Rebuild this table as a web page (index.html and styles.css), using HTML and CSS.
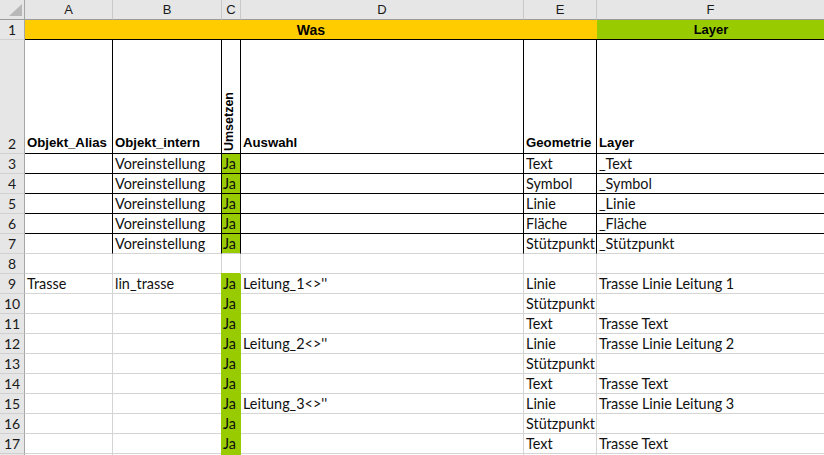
FILE: index.html
```html
<!DOCTYPE html>
<html lang="de">
<head>
<meta charset="utf-8">
<title>Tabelle</title>
<link rel="stylesheet" href="styles.css">
</head>
<body>
<div class="sheet">
  <!-- column headers -->
  <div class="corner"><span class="tri"></span></div>
  <div class="ch">A</div>
  <div class="ch">B</div>
  <div class="ch">C</div>
  <div class="ch">D</div>
  <div class="ch">E</div>
  <div class="ch">F</div>

  <!-- row 1 -->
  <div class="rh">1</div>
  <div class="title was">Was</div>
  <div class="title layer">Layer</div>

  <!-- row 2 -->
  <div class="rh">2</div>
  <div class="c b hd">Objekt_Alias</div>
  <div class="c b hd">Objekt_intern</div>
  <div class="c b hd vert"><span class="vtext">Umsetzen</span></div>
  <div class="c b hd">Auswahl</div>
  <div class="c b hd">Geometrie</div>
  <div class="c b hd">Layer</div>

  <!-- row 3 -->
  <div class="rh">3</div>
  <div class="c b"></div>
  <div class="c b">Voreinstellung</div>
  <div class="c b ja">Ja</div>
  <div class="c b"></div>
  <div class="c b">Text</div>
  <div class="c b">_Text</div>

  <!-- row 4 -->
  <div class="rh">4</div>
  <div class="c b"></div>
  <div class="c b">Voreinstellung</div>
  <div class="c b ja">Ja</div>
  <div class="c b"></div>
  <div class="c b">Symbol</div>
  <div class="c b">_Symbol</div>

  <!-- row 5 -->
  <div class="rh">5</div>
  <div class="c b"></div>
  <div class="c b">Voreinstellung</div>
  <div class="c b ja">Ja</div>
  <div class="c b"></div>
  <div class="c b">Linie</div>
  <div class="c b">_Linie</div>

  <!-- row 6 -->
  <div class="rh">6</div>
  <div class="c b"></div>
  <div class="c b">Voreinstellung</div>
  <div class="c b ja">Ja</div>
  <div class="c b"></div>
  <div class="c b">Fläche</div>
  <div class="c b">_Fläche</div>

  <!-- row 7 -->
  <div class="rh">7</div>
  <div class="c b open"></div>
  <div class="c b open">Voreinstellung</div>
  <div class="c b open ja">Ja</div>
  <div class="c b open"></div>
  <div class="c b open">Stützpunkt</div>
  <div class="c b open">_Stützpunkt</div>

  <!-- row 8 -->
  <div class="rh">8</div>
  <div class="c"></div>
  <div class="c"></div>
  <div class="c"></div>
  <div class="c"></div>
  <div class="c"></div>
  <div class="c"></div>

  <!-- row 9 -->
  <div class="rh">9</div>
  <div class="c">Trasse</div>
  <div class="c">lin_trasse</div>
  <div class="c ja fill">Ja</div>
  <div class="c">Leitung_1&lt;&gt;''</div>
  <div class="c">Linie</div>
  <div class="c">Trasse Linie Leitung 1</div>

  <!-- row 10 -->
  <div class="rh">10</div>
  <div class="c"></div>
  <div class="c"></div>
  <div class="c ja fill">Ja</div>
  <div class="c"></div>
  <div class="c">Stützpunkt</div>
  <div class="c"></div>

  <!-- row 11 -->
  <div class="rh">11</div>
  <div class="c"></div>
  <div class="c"></div>
  <div class="c ja fill">Ja</div>
  <div class="c"></div>
  <div class="c">Text</div>
  <div class="c">Trasse Text</div>

  <!-- row 12 -->
  <div class="rh">12</div>
  <div class="c"></div>
  <div class="c"></div>
  <div class="c ja fill">Ja</div>
  <div class="c">Leitung_2&lt;&gt;''</div>
  <div class="c">Linie</div>
  <div class="c">Trasse Linie Leitung 2</div>

  <!-- row 13 -->
  <div class="rh">13</div>
  <div class="c"></div>
  <div class="c"></div>
  <div class="c ja fill">Ja</div>
  <div class="c"></div>
  <div class="c">Stützpunkt</div>
  <div class="c"></div>

  <!-- row 14 -->
  <div class="rh">14</div>
  <div class="c"></div>
  <div class="c"></div>
  <div class="c ja fill">Ja</div>
  <div class="c"></div>
  <div class="c">Text</div>
  <div class="c">Trasse Text</div>

  <!-- row 15 -->
  <div class="rh">15</div>
  <div class="c"></div>
  <div class="c"></div>
  <div class="c ja fill">Ja</div>
  <div class="c">Leitung_3&lt;&gt;''</div>
  <div class="c">Linie</div>
  <div class="c">Trasse Linie Leitung 3</div>

  <!-- row 16 -->
  <div class="rh">16</div>
  <div class="c"></div>
  <div class="c"></div>
  <div class="c ja fill">Ja</div>
  <div class="c"></div>
  <div class="c">Stützpunkt</div>
  <div class="c"></div>

  <!-- row 17 -->
  <div class="rh">17</div>
  <div class="c"></div>
  <div class="c"></div>
  <div class="c ja fill">Ja</div>
  <div class="c"></div>
  <div class="c">Text</div>
  <div class="c">Trasse Text</div>

  <!-- row 18 (only its top edge is in view) -->
  <div class="rh"></div>
  <div class="c"></div>
  <div class="c"></div>
  <div class="c ja fill"></div>
  <div class="c"></div>
  <div class="c"></div>
  <div class="c"></div>
</div>
</body>
</html>
```

FILE: styles.css
```css
html, body {
  margin: 0;
  padding: 0;
  background: #ffffff;
  overflow: hidden;
}

.sheet {
  display: grid;
  grid-template-columns: 25px 88px 109px 19px 283px 73px 228px;
  grid-template-rows: 20px 20px 114px repeat(16, 20px);
  width: 825px;
  font-family: Lato, "Open Sans", sans-serif;
  font-size: 14.4px;
  color: #111111;
}

.sheet > div {
  box-sizing: border-box;
  min-width: 0;
}

/* headers */
.corner {
  background: #e6e6e6;
  border-right: 1px solid #a6a6a6;
  border-bottom: 1px solid #9b9b9b;
  position: relative;
}

.tri {
  position: absolute;
  right: 2px;
  bottom: 3px;
  width: 0;
  height: 0;
  border-left: 13px solid transparent;
  border-bottom: 12px solid #b8b8b8;
}

.ch {
  background: #e6e6e6;
  border-right: 1px solid #c9c9c9;
  border-bottom: 1px solid #9b9b9b;
  display: flex;
  align-items: center;
  justify-content: center;
  font-size: 13px;
  color: #1a1a1a;
  font-family: "Liberation Sans", Arial, sans-serif;
}

.rh {
  background: #e6e6e6;
  border-right: 1px solid #a6a6a6;
  border-bottom: 1px solid #d0d0d0;
  display: flex;
  align-items: flex-end;
  justify-content: center;
  font-size: 14px;
  line-height: 17px;
  padding-bottom: 1px;
  color: #1a1a1a;
}

/* row 1 titles */
.title {
  display: flex;
  align-items: center;
  justify-content: center;
  font-family: "Liberation Sans", Arial, sans-serif;
  font-weight: bold;
  font-size: 13px;
  color: #000000;
  border-bottom: 1px solid #000000;
}

.was {
  grid-column: span 5;
  background: #ffcc00;
  font-size: 14px;
}

.layer {
  background: #99cc00;
}

/* cells */
.c {
  border-right: 1px solid #d4d4d4;
  border-bottom: 1px solid #d4d4d4;
  display: flex;
  align-items: flex-end;
  padding: 0 0 0 2px;
  line-height: 18px;
  white-space: nowrap;
  overflow: hidden;
}

.c.b {
  border-right-color: #000000;
  border-bottom-color: #000000;
}

.c.b.open {
  border-bottom-color: #d4d4d4;
}

.c.hd {
  font-family: "Liberation Sans", Arial, sans-serif;
  font-weight: bold;
  font-size: 13.2px;
  line-height: 17px;
  padding-bottom: 2px;
  color: #000000;
}

.c.ja {
  background: #99cc00;
  padding-left: 1px;
}

.c.ja.fill {
  border-right-color: #99cc00;
  border-bottom-color: #99cc00;
  box-shadow: -1px -1px 0 0 #99cc00;
}

.vert {
  padding: 0 0 4px 0;
  justify-content: flex-start;
}

.vtext {
  writing-mode: vertical-rl;
  transform: rotate(180deg);
  font-size: 12.5px;
  line-height: 15px;
}
```
